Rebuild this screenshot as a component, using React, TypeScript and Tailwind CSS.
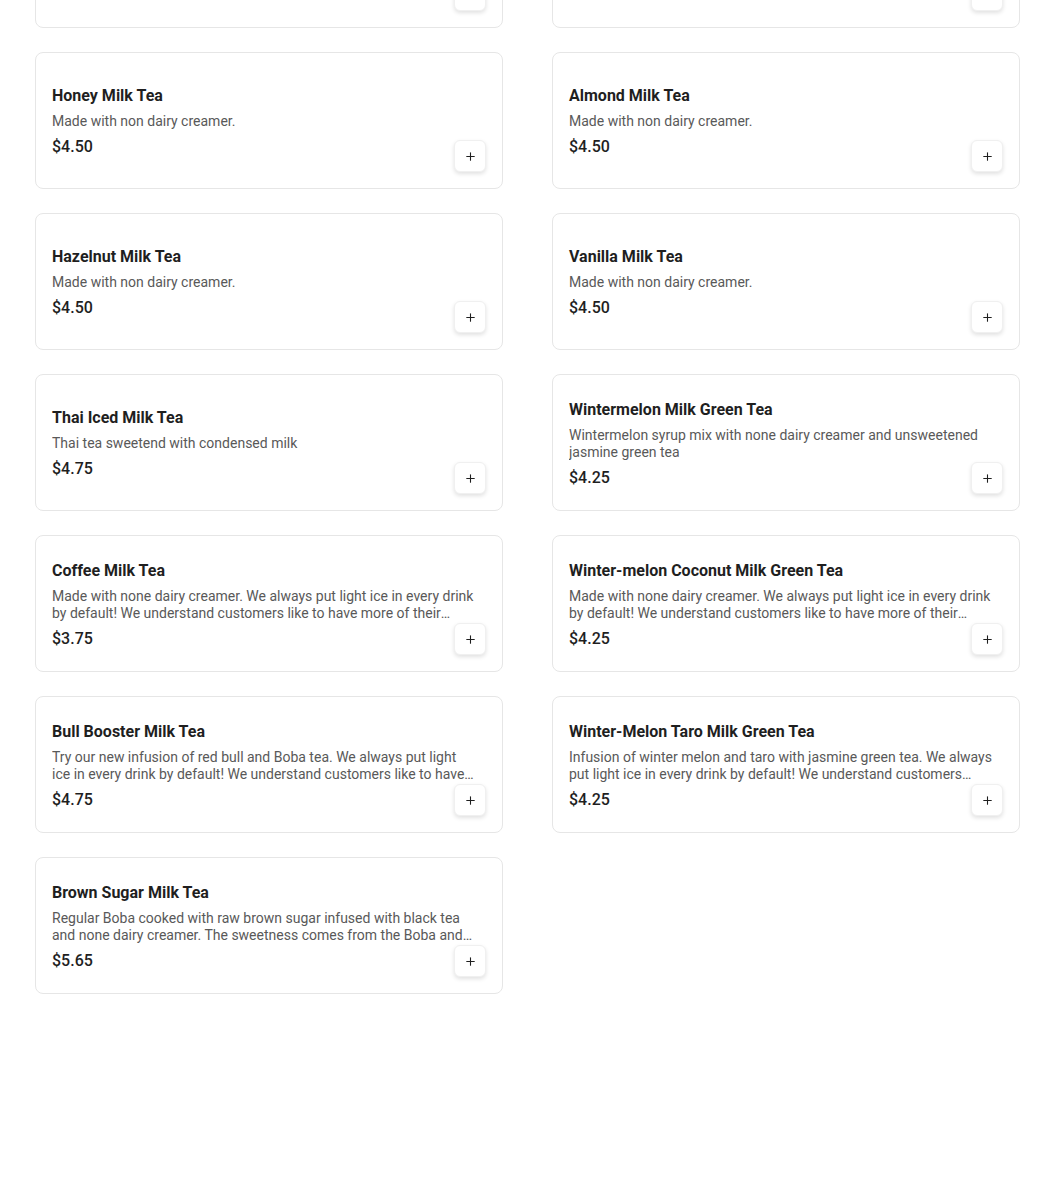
import { Plus } from 'lucide-react';

interface MenuItem {
  id: string;
  name: string;
  description: string;
  price: number;
}

const items: MenuItem[] = [
  { id: 'classic', name: 'Classic Milk Tea', description: 'Made with non dairy creamer.', price: 4.25 },
  { id: 'taro', name: 'Taro Milk Tea', description: 'Made with non dairy creamer.', price: 4.5 },
  { id: 'honey', name: 'Honey Milk Tea', description: 'Made with non dairy creamer.', price: 4.5 },
  { id: 'almond', name: 'Almond Milk Tea', description: 'Made with non dairy creamer.', price: 4.5 },
  { id: 'hazelnut', name: 'Hazelnut Milk Tea', description: 'Made with non dairy creamer.', price: 4.5 },
  { id: 'vanilla', name: 'Vanilla Milk Tea', description: 'Made with non dairy creamer.', price: 4.5 },
  { id: 'thai', name: 'Thai Iced Milk Tea', description: 'Thai tea sweetend with condensed milk', price: 4.75 },
  {
    id: 'wintermelon',
    name: 'Wintermelon Milk Green Tea',
    description: 'Wintermelon syrup mix with none dairy creamer and unsweetened jasmine green tea',
    price: 4.25,
  },
  {
    id: 'coffee',
    name: 'Coffee Milk Tea',
    description:
      'Made with none dairy creamer. We always put light ice in every drink by default! We understand customers like to have more of their beverage and less ice.',
    price: 3.75,
  },
  {
    id: 'wm-coconut',
    name: 'Winter-melon Coconut Milk Green Tea',
    description:
      'Made with none dairy creamer. We always put light ice in every drink by default! We understand customers like to have more of their beverage and less ice.',
    price: 4.25,
  },
  {
    id: 'bull',
    name: 'Bull Booster Milk Tea',
    description:
      'Try our new infusion of red bull and Boba tea. We always put light ice in every drink by default! We understand customers like to have more of their drink.',
    price: 4.75,
  },
  {
    id: 'wm-taro',
    name: 'Winter-Melon Taro Milk Green Tea',
    description:
      'Infusion of winter melon and taro with jasmine green tea. We always put light ice in every drink by default! We understand customers likewise prefer less ice.',
    price: 4.25,
  },
  {
    id: 'brown-sugar',
    name: 'Brown Sugar Milk Tea',
    description:
      'Regular Boba cooked with raw brown sugar infused with black tea and none dairy creamer. The sweetness comes from the Boba and the brown sugar syrup.',
    price: 5.65,
  },
];

function ItemCard({ item }: { item: MenuItem }) {
  return (
    <div className="relative h-[137px] rounded-lg border border-[#e6e6e6] bg-white flex items-center px-4 pt-[2px]">
      <div className="w-[425px]">
        <h3 className="text-[16px] leading-6 font-bold text-[#1f1f1f]">{item.name}</h3>
        <p className="mt-[5px] text-[14px] leading-[17px] text-[#595959] line-clamp-2">{item.description}</p>
        <p className="mt-[5px] text-[16px] leading-6 font-medium text-[#1f1f1f]">${item.price.toFixed(2)}</p>
      </div>
      {/* add button */}
      <button className="absolute right-4 bottom-4 w-8 h-8 rounded-md bg-white border border-[#f0f0f0] shadow-[0_2px_4px_rgba(0,0,0,0.12)] flex items-center justify-center">
        <Plus size={13} strokeWidth={2} className="text-[#1f1f1f]" />
      </button>
    </div>
  );
}

export default function App() {
  return (
    <div className="h-[1198px] overflow-hidden bg-white" style={{ fontFamily: 'Roboto, "Noto Sans", sans-serif' }}>
      <div className="-mt-[109px] pl-[35px] pr-[30px] grid grid-cols-2 gap-x-[49px] gap-y-6">
        {items.map(item => (
          <ItemCard key={item.id} item={item} />
        ))}
      </div>
    </div>
  );
}
